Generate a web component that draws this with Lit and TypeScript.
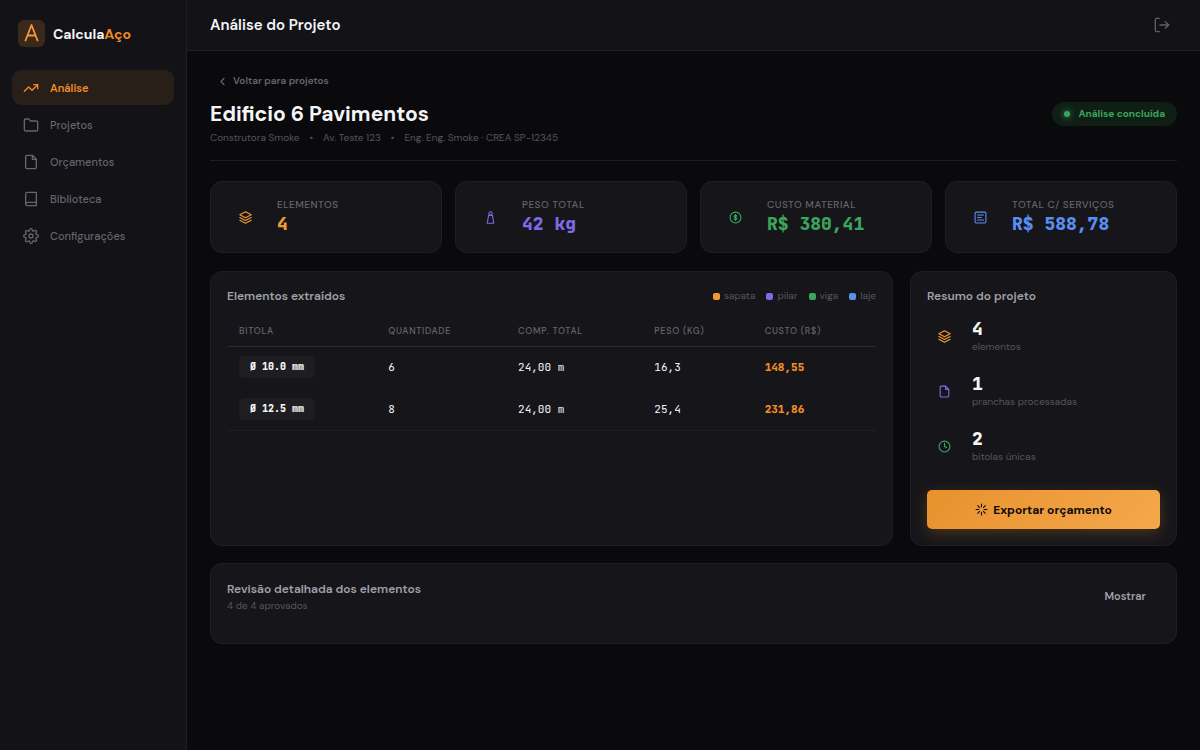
import { LitElement, html, css, svg } from "lit";
import { customElement, state } from "lit/decorators.js";

const paths = {
  trend: svg`<polyline points="22 7 13.5 15.5 8.5 10.5 2 17"/><polyline points="16 7 22 7 22 13"/>`,
  folder: svg`<path d="M22 19a2 2 0 0 1-2 2H4a2 2 0 0 1-2-2V5a2 2 0 0 1 2-2h5l2 3h9a2 2 0 0 1 2 2z"/>`,
  file: svg`<path d="M14 2H6a2 2 0 0 0-2 2v16a2 2 0 0 0 2 2h12a2 2 0 0 0 2-2V8z"/><polyline points="14 2 14 8 20 8"/>`,
  book: svg`<path d="M4 19.5A2.5 2.5 0 0 1 6.5 17H20"/><path d="M6.500 2H20v20H6.500A2.500 2.500 0 0 1 4 19.500v-15A2.500 2.500 0 0 1 6.500 2z"/>`,
  gear: svg`<circle cx="12" cy="12" r="3"/><path d="M19.4 15a1.65 1.65 0 0 0 .33 1.82l.06.06a2 2 0 1 1-2.83 2.83l-.06-.06a1.65 1.65 0 0 0-2.8 1.17V21a2 2 0 0 1-4 0v-.09A1.65 1.65 0 0 0 9 19.4a1.65 1.65 0 0 0-1.82.33l-.06.06a2 2 0 1 1-2.83-2.83l.06-.06A1.65 1.65 0 0 0 3.180 14H3a2 2 0 0 1 0-4h.09A1.65 1.65 0 0 0 4.600 9a1.65 1.65 0 0 0-.33-1.82l-.06-.06a2 2 0 1 1 2.830-2.830l.06.06A1.65 1.65 0 0 0 9 4.680 1.65 1.65 0 0 0 10 3.170V3a2 2 0 0 1 4 0v.09a1.65 1.65 0 0 0 2.820 1.170l.06-.06a2 2 0 1 1 2.830 2.830l-.06.06A1.65 1.65 0 0 0 20.910 10H21a2 2 0 0 1 0 4h-.09A1.65 1.65 0 0 0 19.400 15z"/>`,
  logout: svg`<path d="M8 22H4a2 2 0 0 1-2-2V4a2 2 0 0 1 2-2h4"/><polyline points="17 17 22 12 17 7"/><line x1="22" y1="12" x2="9" y2="12"/>`,
  back: svg`<polyline points="15 18 9 12 15 6"/>`,
  layers: svg`<path d="M12 1.500L1.500 7 12 12.500 22.500 7z"/><path d="M1.500 12L12 17.500 22.500 12"/><path d="M1.500 17L12 22.500 22.500 17"/>`,
  weight: svg`<circle cx="12" cy="4.500" r="3"/><path d="M8.500 8h7l2.500 14.500H6z"/>`,
  coin: svg`<circle cx="12" cy="12" r="10"/><path d="M14.500 9.500C14 8.500 13.300 8 12 8c-1.700 0-2.700.8-2.700 2 0 2.700 5.400 1.300 5.400 4 0 1.200-1 2-2.700 2-1.300 0-2.200-.5-2.700-1.500M12 6.500v11"/>`,
  receipt: svg`<rect x="2" y="2" width="20" height="20" rx="2"/><path d="M6.500 7.500h11M6.500 12h7M6.500 16.500h11"/>`,
  clock: svg`<circle cx="12" cy="12" r="10"/><polyline points="12 6 12 12 16 14"/>`,
  spark: svg`<path d="M12 2v5M12 17v5M2 12h5M17 12h5M5 5l3.500 3.500M15.500 15.500L19 19M5 19l3.500-3.500M15.500 8.500L19 5"/>`,
};

const icon = (name: keyof typeof paths, cls: string) =>
  html`<svg class="icon ${cls}" viewBox="0 0 24 24" aria-hidden="true">${paths[name]}</svg>`;

const nav = [
  { label: "Análise", icon: "trend" },
  { label: "Projetos", icon: "folder" },
  { label: "Orçamentos", icon: "file" },
  { label: "Biblioteca", icon: "book" },
  { label: "Configurações", icon: "gear" },
] as const;

const kpis = [
  { label: "Elementos", value: "4", icon: "layers", tone: "orange" },
  { label: "Peso total", value: "42 kg", icon: "weight", tone: "purple" },
  { label: "Custo material", value: "R$ 380,41", icon: "coin", tone: "green" },
  { label: "Total c/ serviços", value: "R$ 588,78", icon: "receipt", tone: "blue" },
] as const;

const legend = [
  { label: "sapata", tone: "orange" },
  { label: "pilar", tone: "purple" },
  { label: "viga", tone: "green" },
  { label: "laje", tone: "blue" },
];

const rows = [
  { bitola: "Ø 10.0 mm", qtd: "6", comp: "24,00 m", peso: "16,3", custo: "148,55" },
  { bitola: "Ø 12.5 mm", qtd: "8", comp: "24,00 m", peso: "25,4", custo: "231,86" },
];

const summary = [
  { value: "4", label: "elementos", icon: "layers", tone: "orange" },
  { value: "1", label: "pranchas processadas", icon: "file", tone: "purple" },
  { value: "2", label: "bitolas únicas", icon: "clock", tone: "green" },
] as const;

@customElement("app-root")
export class AppRoot extends LitElement {
  @state() private active = "Análise";

  static styles = css`
    :host {
      --mono: "JetBrains Mono", "DejaVu Sans Mono", monospace;
      --line: #1f1f23;
      --muted: #55555c;
      --soft: #a0a0a8;
      display: flex;
      min-height: 100vh;
      background: #0a0a0c;
      color: #f5f5f7;
      font-family: "DM Sans", Inter, sans-serif;
      font-size: 11px;
      line-height: 16px;
    }
    * { box-sizing: border-box; }
    h1, h2, p, ul { margin: 0; padding: 0; }
    ul { list-style: none; }
    button { font: inherit; color: inherit; background: none; border: 0; padding: 0; cursor: pointer; }
    a { color: inherit; text-decoration: none; }
    .icon { display: block; flex: none; width: 13px; height: 13px; fill: none; stroke: currentColor; stroke-width: 2; stroke-linecap: round; stroke-linejoin: round; }
    .icon.nav-icon { width: 16px; height: 16px; }
    .orange { color: #f09a36; }
    .purple { color: #7c6be6; }
    .green { color: #3ba55d; }
    .blue { color: #5a8ff0; }

    .sidebar { flex: none; width: 187px; padding: 20px 12px; background: #121217; border-right: 1px solid var(--line); }
    .brand { display: flex; align-items: center; gap: 8px; padding: 0 6px; margin-bottom: 23px; font-size: 14px; font-weight: 700; }
    .logo { display: block; width: 27px; height: 27px; border-radius: 6px; background: #3a291a; }
    .brand .orange, .link.on { color: #f28c28; }
    .nav { display: flex; flex-direction: column; gap: 2px; }
    .link { display: flex; align-items: center; gap: 11px; height: 35px; padding: 0 11px; border-radius: 9px; color: #65656c; font-weight: 500; }
    .link.on { background: #281f19; font-weight: 600; }

    .page { flex: 1; min-width: 0; }
    .topbar { display: flex; align-items: center; justify-content: space-between; height: 51px; padding: 0 30px 0 23px; background: #121217; border-bottom: 1px solid var(--line); }
    .topbar-title { font-size: 15px; font-weight: 600; }
    .exit { color: #606067; }
    .content { padding: 19px 23px; }
    .back { display: flex; align-items: center; gap: 4px; height: 22px; padding: 0 6px; color: #65656c; font-size: 10px; font-weight: 600; }
    .head { padding: 8px 0 14px; margin-bottom: 20px; border-bottom: 1px solid var(--line); }
    .head-row { display: flex; align-items: center; justify-content: space-between; margin-bottom: 2px; }
    .head h1 { font-size: 21px; line-height: 28px; font-weight: 700; }
    .meta { display: flex; gap: 10px; color: var(--muted); font-size: 10px; }
    .badge { display: flex; align-items: center; gap: 8px; height: 24px; padding: 0 12px; border-radius: 12px; background: #0f1f16; color: #3ba55d; font-size: 10px; font-weight: 700; }
    .dot { width: 6px; height: 6px; border-radius: 50%; background: currentColor; box-shadow: 0 0 6px currentColor; }

    .card { background: #16161a; border: 1px solid var(--line); border-radius: 12px; }
    .kpis { display: grid; grid-template-columns: repeat(4, 1fr); gap: 13px; margin-bottom: 18px; }
    .kpi { display: flex; align-items: center; gap: 14px; height: 72px; padding: 0 17px; }
    .icon-box { display: grid; place-items: center; flex: none; width: 35px; height: 35px; }
    .caps { color: #65656c; font-size: 9px; font-weight: 500; letter-spacing: 0.7px; text-transform: uppercase; }
    .value { font-family: var(--mono); font-size: 18px; line-height: 24px; font-weight: 800; }
    .kpi .caps { font-size: 10px; line-height: 14px; letter-spacing: 0.5px; }

    .panels { display: grid; grid-template-columns: minmax(0, 1fr) 267px; gap: 17px; margin-bottom: 17px; }
    .panel { padding: 16px; }
    .panel-head { display: flex; align-items: center; justify-content: space-between; }
    h2 { color: var(--soft); font-size: 12px; line-height: 16px; font-weight: 600; }
    .legend { display: flex; gap: 11px; color: var(--muted); font-size: 10px; }
    .legend li { display: flex; align-items: center; gap: 4px; }
    .swatch { width: 7px; height: 7px; border-radius: 2px; background: currentColor; }
    table { width: 100%; margin-top: 12px; border-collapse: collapse; table-layout: fixed; }
    th { height: 30px; padding: 0 12px; text-align: left; border-bottom: 1px solid #2a2a2f; white-space: nowrap; }
    td { height: 42px; padding: 0 12px; font-family: var(--mono); }
    tbody tr:last-child td { border-bottom: 1px solid var(--line); }
    .c-bitola { width: 23%; }
    .c-qtd { width: 20%; }
    .c-comp { width: 21%; }
    .c-peso { width: 17%; }
    .pill { display: inline-block; padding: 3px 11px; border-radius: 5px; background: #1e1e22; font-size: 10px; font-weight: 800; }
    .cost { color: #f28c28; font-weight: 800; }

    .resume { display: flex; flex-direction: column; }
    .stats { display: flex; flex-direction: column; gap: 15px; margin: 12px 0 24px; }
    .stat { display: flex; align-items: center; gap: 10px; height: 40px; }
    .stat .value { line-height: 22px; }
    .stat-label { color: var(--muted); font-size: 10px; line-height: 14px; }
    .export { display: flex; align-items: center; justify-content: center; gap: 5px; height: 39px; border-radius: 5px; background: linear-gradient(135deg, #e8912d, #f5a84b); box-shadow: 0 4px 14px rgba(232, 145, 45, 0.25); color: #0a0a0c; font-size: 12px; font-weight: 700; }
    .review { display: flex; align-items: flex-start; justify-content: space-between; min-height: 81px; padding: 17px 16px; }
    .review p { margin-top: 1px; color: var(--muted); font-size: 10px; }
    .show { padding: 7px 14px; color: var(--soft); font-size: 11px; line-height: 16px; font-weight: 600; }
  `;

  render() {
    return html`
      <aside class="sidebar">
        <div class="brand">
          <svg class="logo" viewBox="0 0 27 27" fill="none" stroke="#f09a36" stroke-width="1.800" stroke-linecap="round" stroke-linejoin="round" aria-hidden="true">
            <path d="M7.500 20.500L13.500 5L19.500 20.500M9.500 15.500H17.500"/>
          </svg>
          <span>Calcula<span class="orange">Aço</span></span>
        </div>
        <nav class="nav">
          ${nav.map((n) => html`
            <a class="link ${this.active === n.label ? "on" : ""}" href="#" @click=${() => (this.active = n.label)}>
              ${icon(n.icon, "nav-icon")}<span>${n.label}</span>
            </a>`)}
        </nav>
      </aside>
      <div class="page">
        <header class="topbar">
          <span class="topbar-title">Análise do Projeto</span>
          <button class="exit" aria-label="Sair">${icon("logout", "nav-icon")}</button>
        </header>
        <main class="content">
          <button class="back">${icon("back", "")}Voltar para projetos</button>
          <section class="head">
            <div class="head-row">
              <h1>Edificio 6 Pavimentos</h1>
              <span class="badge"><span class="dot"></span>Análise concluída</span>
            </div>
            <p class="meta">
              <span>Construtora Smoke</span><span>•</span><span>Av. Teste 123</span><span>•</span><span>Eng. Eng. Smoke · CREA SP-12345</span>
            </p>
          </section>
          <section class="kpis">
            ${kpis.map((k) => html`
              <div class="card kpi">
                <span class="icon-box ${k.tone}">${icon(k.icon, "")}</span>
                <div>
                  <p class="caps">${k.label}</p>
                  <p class="value ${k.tone}">${k.value}</p>
                </div>
              </div>`)}
          </section>
          <div class="panels">
            <section class="card panel">
              <div class="panel-head">
                <h2>Elementos extraídos</h2>
                <ul class="legend">
                  ${legend.map((l) => html`<li><span class="swatch ${l.tone}"></span>${l.label}</li>`)}
                </ul>
              </div>
              <table>
                <thead>
                  <tr>
                    <th class="caps c-bitola">Bitola</th>
                    <th class="caps c-qtd">Quantidade</th>
                    <th class="caps c-comp">Comp. total</th>
                    <th class="caps c-peso">Peso (kg)</th>
                    <th class="caps">Custo (R$)</th>
                  </tr>
                </thead>
                <tbody>
                  ${rows.map((r) => html`
                    <tr>
                      <td><span class="pill">${r.bitola}</span></td>
                      <td>${r.qtd}</td>
                      <td>${r.comp}</td>
                      <td>${r.peso}</td>
                      <td class="cost">${r.custo}</td>
                    </tr>`)}
                </tbody>
              </table>
            </section>
            <section class="card panel resume">
              <h2>Resumo do projeto</h2>
              <div class="stats">
                ${summary.map((s) => html`
                  <div class="stat">
                    <span class="icon-box ${s.tone}">${icon(s.icon, "")}</span>
                    <div>
                      <p class="value">${s.value}</p>
                      <p class="stat-label">${s.label}</p>
                    </div>
                  </div>`)}
              </div>
              <button class="export">${icon("spark", "")}Exportar orçamento</button>
            </section>
          </div>
          <section class="card review">
            <div>
              <h2>Revisão detalhada dos elementos</h2>
              <p>4 de 4 aprovados</p>
            </div>
            <button class="show">Mostrar</button>
          </section>
        </main>
      </div>
    `;
  }
}
